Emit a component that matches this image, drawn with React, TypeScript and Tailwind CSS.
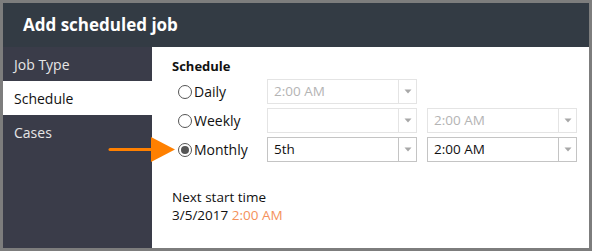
const font = { fontFamily: '"Open Sans", "Noto Sans", sans-serif' }

function Caret() {
  return (
    <svg width="8" height="5" viewBox="0 0 8 5" className="block">
      <path d="M0.5 0.5 L7.5 0.5 L4 4.5 Z" fill="#a8a8a8" />
    </svg>
  )
}

function Select({ value, disabled }: { value?: string; disabled?: boolean }) {
  return (
    <div
      className={`flex h-[25px] w-[150px] border ${disabled ? "border-[#e4e4e4] text-[#b4b4b4]" : "border-[#c4c4c4] text-[#111]"}`}
    >
      <div className="flex-1 flex items-center pl-[6px] text-[13.5px] leading-none">{value}</div>
      <div className={`w-[18px] flex items-center justify-center border-l ${disabled ? "border-[#e4e4e4]" : "border-[#c4c4c4]"}`}>
        <Caret />
      </div>
    </div>
  )
}

function Radio({ label, checked }: { label: string; checked?: boolean }) {
  return (
    <div className="flex items-center w-[95px] pl-[6px] text-[14px] text-[#111]">
      <span className="w-[14px] h-[14px] rounded-full border border-[#555] bg-white flex items-center justify-center mr-[2px]">
        {checked && <span className="w-[8px] h-[8px] rounded-full bg-[#555]" />}
      </span>
      {label}
    </div>
  )
}

export default function App() {
  return (
    <div style={font} className="relative w-[592px] h-[251px] border-[3px] border-[#7d7d7d] bg-white flex flex-col">
      <div className="h-[44px] bg-[#333b44] flex items-center pl-[20px] text-white text-[17px] font-bold">
        Add scheduled job
      </div>
      <div className="flex flex-1">
        <div className="w-[149px] bg-[#3a3c49] flex flex-col text-[14px]">
          <div className="h-[34px] flex items-center pl-[11px] text-[#e6e6e6]">Job Type</div>
          <div className="h-[34px] flex items-center pl-[11px] bg-white text-[#111]">Schedule</div>
          <div className="h-[34px] flex items-center pl-[11px] text-[#e6e6e6]">Cases</div>
        </div>
        <div className="flex-1 pl-[20px] pt-[10px]">
          <div className="text-[13px] font-bold text-[#111] leading-[18px]">Schedule</div>
          <div className="flex flex-col gap-[4px] mt-[4px]">
            <div className="flex items-center">
              <Radio label="Daily" />
              <Select value="2:00 AM" disabled />
            </div>
            <div className="flex items-center">
              <Radio label="Weekly" />
              <Select disabled />
              <div className="w-[10px]" />
              <Select value="2:00 AM" disabled />
            </div>
            <div className="flex items-center">
              <Radio label="Monthly" checked />
              <Select value="5th" />
              <div className="w-[10px]" />
              <Select value="2:00 AM" />
            </div>
          </div>
          <div className="mt-[26px] text-[13.5px] leading-[18px] text-[#111]">
            <div>Next start time</div>
            <div>
              3/5/2017 <span className="text-[#f4915a]">2:00 AM</span>
            </div>
          </div>
        </div>
      </div>
      <svg className="absolute left-[104px] top-[134px]" width="70" height="26" viewBox="0 0 70 26">
        <line x1="3" y1="12.5" x2="48" y2="12.5" stroke="#ff8000" strokeWidth="3" strokeLinecap="round" />
        <path d="M44 0 L68 12.5 L44 25 Z" fill="#ff8000" />
      </svg>
    </div>
  )
}
